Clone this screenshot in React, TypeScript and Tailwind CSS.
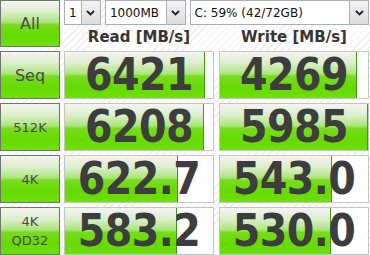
import React from 'react';

type Row = {
  label: string[];
  read: string;
  readW: number;
  write: string;
  writeW: number;
};

const rows: Row[] = [
  { label: ['Seq'], read: '6421', readW: 140, write: '4269', writeW: 137 },
  { label: ['512K'], read: '6208', readW: 139, write: '5985', writeW: 148 },
  { label: ['4K'], read: '622.7', readW: 113, write: '543.0', writeW: 112 },
  { label: ['4K', 'QD32'], read: '583.2', readW: 112, write: '530.0', writeW: 111 }
];

const greenBg =
  'bg-[linear-gradient(180deg,#f3f5f1_0%,#dcefcc_24%,#ade57e_47%,#78dc1e_53%,#66da00_78%,#6ee00c_100%)]';

function Select({ text, width }: { text: string; width: string }) {
  return (
    <div className={`flex h-[25px] border border-[#a9afb8] bg-white ${width}`}>
      <span className="flex flex-1 items-center pl-[4px] text-[12px] text-[#111]">{text}</span>
      <span className="flex w-[19px] items-center justify-center border-l border-[#a9afb8] bg-[linear-gradient(180deg,#f4f4f4,#dcdcdc)]">
        <svg width="9" height="6" viewBox="0 0 9 6">
          <path d="M1 1 L4.5 4.5 L8 1" fill="none" stroke="#1c2040" strokeWidth="1.8" />
        </svg>
      </span>
    </div>
  );
}

function SideButton({ label, big }: { label: string[]; big?: boolean }) {
  return (
    <div
      className={`flex h-full flex-col items-center justify-center border border-[#6f756f] ${greenBg} leading-[19px] text-[#4a4858] ${
        big ? 'text-[16px]' : 'text-[13px]'
      }`}
    >
      {label.map((line) => (
        <span key={line}>{line}</span>
      ))}
    </div>
  );
}

function ValueBox({ value, width }: { value: string; width: number }) {
  return (
    <div className="relative flex h-[48px] items-center justify-center border border-[#c4c4c4] bg-white">
      <div
        className={`absolute inset-y-0 left-0 border-r border-[#3f9a14] ${greenBg}`}
        style={{ width }}
      />
      <span className="relative text-[44px] font-bold leading-[44px] tracking-[-0.5px] text-[#3d3d3d] [font-family:'DejaVu_Sans_Condensed','DejaVu_Sans',sans-serif] [font-stretch:condensed]">
        {value}
      </span>
    </div>
  );
}

export default function App() {
  return (
    <div className="h-[255px] w-[370px] bg-[repeating-linear-gradient(135deg,#ffffff_0px,#ffffff_4px,#ededed_4px,#ededed_5px)] [font-family:'DejaVu_Sans',sans-serif]">
      <div className="grid grid-cols-[60px_150px_151px] grid-rows-[47px_48px_48px_48px_48px] gap-x-[4px] gap-y-[4px]">
        <SideButton label={['All']} big />
        <div className="col-span-2 flex flex-col">
          <div className="flex gap-[4px]">
            <Select text="1" width="w-[37px]" />
            <Select text="1000MB" width="w-[81px]" />
            <Select text="C: 59% (42/72GB)" width="w-[180px]" />
          </div>
          <div className="grid flex-1 grid-cols-[150px_151px] gap-x-[4px] pt-[1px] text-[15px] font-bold text-[#3a3430]">
            <span className="flex items-center justify-center">Read [MB/s]</span>
            <span className="flex items-center justify-center pl-[1px]">Write [MB/s]</span>
          </div>
        </div>
        {rows.map((row) => (
          <React.Fragment key={row.label.join(' ')}>
            <SideButton label={row.label} big={row.label[0] === 'Seq'} />
            <ValueBox value={row.read} width={row.readW} />
            <div className="ml-[1px]">
              <ValueBox value={row.write} width={row.writeW} />
            </div>
          </React.Fragment>
        ))}
      </div>
    </div>
  );
}
